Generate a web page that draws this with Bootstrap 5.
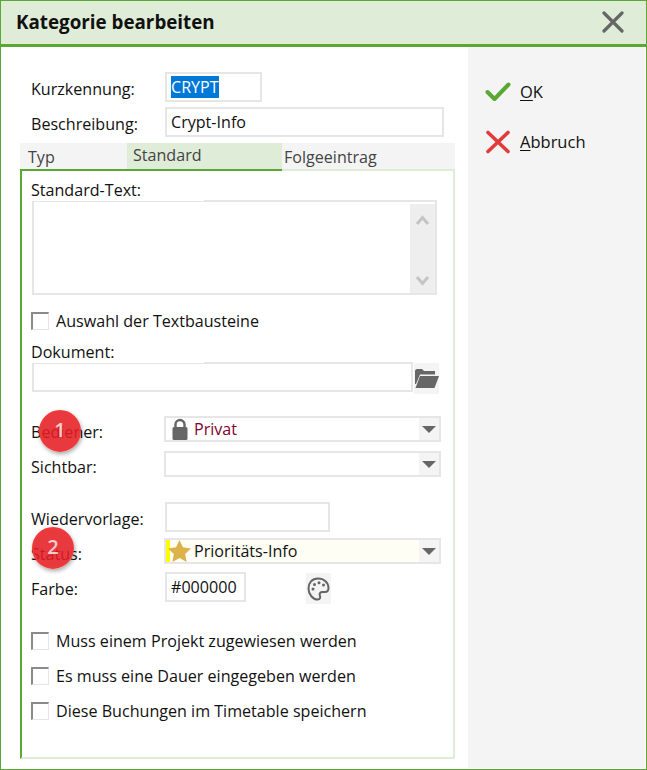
<!DOCTYPE html>
<html lang="de">
<head>
  <meta charset="UTF-8" />
  <meta name="viewport" content="width=device-width, initial-scale=1.0"/>
  <title>Kategorie bearbeiten</title>
  <link href="https://cdn.jsdelivr.net/npm/bootstrap@5.3.2/dist/css/bootstrap.min.css" rel="stylesheet"/>
  <style>
    body {
      margin: 0;
      background: #fff;
      color: #111;
      font-family: "Open Sans", "Noto Sans", sans-serif;
      font-size: 16.1px;
      line-height: 22px;
    }
    .dlg { width: 647px; height: 770px; border: 1px solid #5aa834; }
    .dlg-head { height: 46px; background: #dfecd7; border-bottom: 3px solid #5aa834; padding: 0 22px 2px 15px; }
    .dlg-title { font-size: 18.8px; font-weight: 700; color: #111; }
    .dlg-body { height: 722px; }
    .dlg-left { width: 467px; flex: none; }
    .dlg-side { width: 177px; height: 721px; background: #f4f4f4; padding: 34px 0 0 17px; font-size: 16.5px; }
    .side-btn { height: 22px; margin-bottom: 28px; color: #111; }
    .side-btn svg { width: 26px; height: 24px; margin-right: 9px; flex: none; }
    .side-btn u { text-underline-offset: 2px; }
    .top-row { padding-left: 30px; }
    .lbl { width: 134px; height: 30px; flex: none; padding-top: 6px; }
    .lbl-low { height: 26px; padding-top: 5px; width: 133px; }
    .field {
      height: 30px;
      border: 2px solid #e6e6e6;
      background: #fff;
      padding: 0 4px;
      line-height: 26px;
      color: #111;
    }
    .w-kurz { width: 97px; }
    .w-besch { width: 279px; }
    .w-wieder { width: 165px; }
    .w-farbe { width: 81px; }
    .sel-text { background: #0078d7; color: #fff; display: inline-block; line-height: 22px; }
    .tabstrip {
      width: 435px;
      height: 28px;
      margin-left: 19px;
      background: #f4f4f4;
      color: #444;
    }
    .tab-item { height: 28px; border-bottom: 2px solid #dfecd7; line-height: 26px; }
    .tab-typ { width: 107px; padding-left: 8px; border-bottom-color: #5aa834; padding-top: 1px; }
    .tab-std { width: 155px; padding-left: 6px; background: #dfecd7; border-bottom-color: #5aa834; line-height: 24px; }
    .tab-folge { width: 173px; padding-left: 2px; padding-top: 1px; }
    .tab-panel {
      width: 435px;
      height: 588px;
      margin-left: 19px;
      border-left: 2px solid #5aa834;
      border-right: 2px solid #dfecd7;
      border-bottom: 2px solid #dfecd7;
      padding: 8px 0 0 9px;
      position: relative;
    }
    .cap-lbl { width: 173px; height: 22px; margin-bottom: -1px; background: #fff; position: relative; }
    .area {
      width: 405px;
      height: 95px;
      margin-left: 1px;
      border: 2px solid #e6e6e6;
      padding: 2px 0;
      justify-content: flex-end;
    }
    .area-scroll { width: 25px; height: 89px; background: #eee; padding: 10px 5px 6px; }
    .area-scroll svg { width: 15px; height: 12px; }
    .chk-row { height: 22px; }
    .chk-box {
      width: 18px;
      height: 18px;
      margin-right: 7px;
      flex: none;
      background: #fff;
      border: 1px solid #e6e6e6;
      border-top: 2px solid #8a8a8a;
      border-left: 2px solid #8a8a8a;
    }
    .sp-auswahl { margin-top: 15px; }
    .sp-dok { margin-top: 9px; }
    .sp-bed { margin-top: 22px; }
    .doc-box { width: 381px; height: 30px; margin-left: 1px; border: 2px solid #e6e6e6; }
    .doc-row { height: 32px; }
    .icon-btn { width: 25px; height: 31px; background: #f4f4f4; margin: 1px 0 0 1px; flex: none; }
    .combo {
      width: 277px;
      height: 26px;
      border: 2px solid #e6e6e6;
      background: #fff;
      line-height: 22px;
    }
    .combo-val { min-width: 0; }
    .combo-arrow { width: 20px; background: #f4f4f4; }
    .combo-arrow svg { width: 16px; height: 7px; }
    .combo-ico { width: 28px; flex: none; }
    .star-ico { width: 26px; margin-left: -2px; }
    .txt-privat { color: #80002f; }
    .combo-status { background: #fffef5; }
    .strip-yellow { width: 4px; height: 22px; background: #ff0; flex: none; }
    .sp-9 { margin-top: 9px; }
    .sp-25 { margin-top: 25px; }
    .sp-6 { margin-top: 6px; }
    .sp-8 { margin-top: 8px; }
    .sp-26 { margin-top: 26px; }
    .sp-13 { margin-top: 13px; }
    .sp-5 { margin-top: 5px; }
    .palette-btn { width: 25px; height: 31px; background: #f4f4f4; margin: 1px 0 0 60px; }
    .step-dot {
      position: absolute;
      width: 42px;
      height: 42px;
      border-radius: 50%;
      background: rgba(229, 30, 36, .88);
      border: 2px solid #f03a3a;
      box-shadow: 1px 2px 4px rgba(0, 0, 0, .35);
      color: rgba(255, 255, 255, .75);
      font-size: 20px;
      font-weight: 600;
      line-height: 36px;
      text-align: center;
    }
    .dot-one { left: 17px; top: 239px; }
    .dot-two { left: 10px; top: 356px; }
  </style>
</head>
<body>
  <div class="dlg">
    <!-- Title bar -->
    <div class="dlg-head d-flex align-items-center justify-content-between">
      <span class="dlg-title">Kategorie bearbeiten</span>
      <svg width="22" height="22" viewBox="0 0 22 22"><path d="M2 2 20 20M20 2 2 20" stroke="#666" stroke-width="3.2" stroke-linecap="round"/></svg>
    </div>

    <div class="dlg-body d-flex">
      <!-- Form -->
      <div class="dlg-left">
        <div class="top-row d-flex" style="margin-top:25px">
          <div class="lbl">Kurzkennung:</div>
          <div class="field w-kurz"><span class="sel-text">CRYPT</span></div>
        </div>
        <div class="top-row d-flex sp-5">
          <div class="lbl">Beschreibung:</div>
          <div class="field w-besch">Crypt-Info</div>
        </div>

        <!-- Tabs -->
        <div class="tabstrip d-flex sp-6">
          <div class="tab-item tab-typ">Typ</div>
          <div class="tab-item tab-std">Standard</div>
          <div class="tab-item tab-folge">Folgeeintrag</div>
        </div>

        <div class="tab-panel">
          <div class="cap-lbl">Standard-Text:</div>
          <div class="area d-flex">
            <div class="area-scroll d-flex flex-column justify-content-between">
              <svg viewBox="0 0 15 12"><path d="M2 10 7.500 3.500 13 10" fill="none" stroke="#c4c4c4" stroke-width="3"/></svg>
              <svg viewBox="0 0 15 12"><path d="M2 2 7.500 8.500 13 2" fill="none" stroke="#c4c4c4" stroke-width="3"/></svg>
            </div>
          </div>

          <div class="chk-row d-flex align-items-center sp-auswahl"><span class="chk-box"></span>Auswahl der Textbausteine</div>

          <div class="cap-lbl sp-dok">Dokument:</div>
          <div class="doc-row d-flex align-items-start">
            <div class="doc-box"></div>
            <div class="icon-btn d-flex align-items-center justify-content-center">
              <svg width="24" height="21" viewBox="0 0 24 21"><path d="M0 3C0 2 1 1 2 1H7L9 3H20V6.500H5L1 16H0ZM5 8H24L19.500 20H0.500Z" fill="#666"/></svg>
            </div>
          </div>

          <div class="d-flex sp-bed">
            <div class="lbl lbl-low">Bediener:</div>
            <div class="combo d-flex">
              <div class="combo-val flex-grow-1 d-flex align-items-center">
                <span class="combo-ico d-flex justify-content-center">
                  <svg width="16" height="22" viewBox="0 0 16 22"><path d="M3.500 10V6.500a4.500 4.500 0 0 1 9 0V10" fill="none" stroke="#666" stroke-width="2.400"/><rect x="0.500" y="9" width="15" height="13" rx="1.500" fill="#666"/></svg>
                </span>
                <span class="txt-privat">Privat</span>
              </div>
              <div class="combo-arrow d-flex align-items-center justify-content-center">
                <svg viewBox="0 0 14 7"><path d="M0 0H14L7 7Z" fill="#666"/></svg>
              </div>
            </div>
          </div>

          <div class="d-flex sp-9">
            <div class="lbl lbl-low">Sichtbar:</div>
            <div class="combo d-flex">
              <div class="combo-val flex-grow-1"></div>
              <div class="combo-arrow d-flex align-items-center justify-content-center">
                <svg viewBox="0 0 14 7"><path d="M0 0H14L7 7Z" fill="#666"/></svg>
              </div>
            </div>
          </div>

          <div class="d-flex sp-25">
            <div class="lbl">Wiedervorlage:</div>
            <div class="field w-wieder"></div>
          </div>

          <div class="d-flex sp-6">
            <div class="lbl lbl-low">Status:</div>
            <div class="combo d-flex">
              <div class="combo-val combo-status flex-grow-1 d-flex align-items-center">
                <span class="strip-yellow"></span>
                <span class="combo-ico star-ico d-flex justify-content-start">
                  <svg width="23" height="22" viewBox="0 0 22 21"><path d="M11 0 14.300 7 22 8 16.400 13.300 17.800 21 11 17.300 4.200 21 5.600 13.300 0 8 7.700 7Z" fill="#dcb34a"/></svg>
                </span>
                <span>Prioritäts-Info</span>
              </div>
              <div class="combo-arrow d-flex align-items-center justify-content-center">
                <svg viewBox="0 0 14 7"><path d="M0 0H14L7 7Z" fill="#666"/></svg>
              </div>
            </div>
          </div>

          <div class="d-flex sp-8">
            <div class="lbl">Farbe:</div>
            <div class="field w-farbe">#000000</div>
            <div class="palette-btn d-flex align-items-center justify-content-center">
              <svg width="23" height="24" viewBox="0 0 23 24">
                <path d="M11 1.500C5 1.500 1.500 6 1.500 11.500C1.500 17.500 6 22.500 10.500 22.500C13.500 22.500 13.500 20 12.800 18.500C12 16.500 13.500 15 15.500 15H18C20.500 15 21.500 13 21.500 11C21.500 5.500 17 1.500 11 1.500Z" fill="none" stroke="#666" stroke-width="2"/>
                <circle cx="6" cy="12" r="1.500" fill="#666"/><circle cx="7.500" cy="7.500" r="1.500" fill="#666"/><circle cx="12" cy="5.800" r="1.500" fill="#666"/><circle cx="16.500" cy="8" r="1.500" fill="#666"/>
              </svg>
            </div>
          </div>

          <div class="chk-row d-flex align-items-center sp-26"><span class="chk-box"></span>Muss einem Projekt zugewiesen werden</div>
          <div class="chk-row d-flex align-items-center sp-13"><span class="chk-box"></span>Es muss eine Dauer eingegeben werden</div>
          <div class="chk-row d-flex align-items-center sp-13"><span class="chk-box"></span>Diese Buchungen im Timetable speichern</div>

          <!-- Numbered markers over the form -->
          <div class="step-dot dot-one">1</div>
          <div class="step-dot dot-two">2</div>
        </div>
      </div>

      <!-- Buttons -->
      <div class="dlg-side">
        <div class="side-btn d-flex align-items-center">
          <svg viewBox="0 0 26 24"><path d="M2.500 12 9.500 19 23.500 4.500" fill="none" stroke="#5aa834" stroke-width="4" stroke-linecap="round" stroke-linejoin="round"/></svg>
          <span><u>O</u>K</span>
        </div>
        <div class="side-btn d-flex align-items-center">
          <svg viewBox="0 0 26 24"><path d="M3 2.500 23 21.500M23 2.500 3 21.500" fill="none" stroke="#e23a3a" stroke-width="3.600" stroke-linecap="round"/></svg>
          <span><u>A</u>bbruch</span>
        </div>
      </div>
    </div>
  </div>
  <script src="https://cdn.jsdelivr.net/npm/bootstrap@5.3.2/dist/js/bootstrap.bundle.min.js"></script>
</body>
</html>
